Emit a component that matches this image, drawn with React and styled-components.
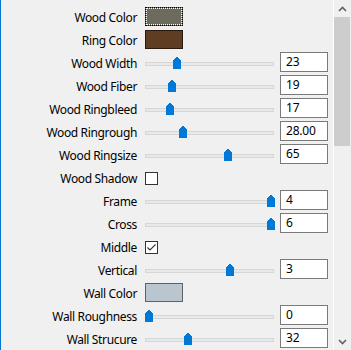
import React from "react";
import styled, { createGlobalStyle } from "styled-components";

const Global = createGlobalStyle`
  html, body { margin: 0; padding: 0; background: #f0f0f0; }
  body { font-family: "Segoe UI", "Noto Sans", "Open Sans", sans-serif; font-size: 12px; color: #000; }
`;

const Frame = styled.div`
  display: flex;
  width: 351px;
  height: 350px;
  overflow: hidden;
  background: #f0f0f0;
`;

const Panel = styled.div`
  flex: 0 0 333px;
  border-left: 1px solid #0078d7;
  padding-top: 4px;
  box-sizing: border-box;
  display: flex;
  flex-direction: column;
`;

const Row = styled.div`
  display: grid;
  grid-template-columns: 136px 129px 48px;
  column-gap: 8px;
  height: 23px;
  align-items: center;
  & > :nth-child(3) { margin-left: -2px; }
`;

const Label = styled.div`
  text-align: right;
  white-space: nowrap;
  padding-top: 4px;
  line-height: 16px;
  letter-spacing: -0.35px;
`;

const Control = styled.div`
  display: flex;
  align-items: center;
  height: 23px;
`;

const Swatch = styled.div`
  width: 38px;
  height: 19px;
  box-sizing: border-box;
  margin-top: 1px;
  background: ${p => p.$color};
  border: 1px ${p => (p.$focus ? "dotted #000" : `solid ${p.$border || "#333"}`)};
  outline: ${p => (p.$focus ? "1px dotted #fff" : "none")};
  outline-offset: -2px;
`;

const SliderWrap = styled.div`
  position: relative;
  width: 129px;
  height: 23px;
`;

const Track = styled.div`
  position: absolute;
  left: 0;
  right: 0;
  top: 12px;
  height: 4px;
  box-sizing: border-box;
  background: #e7eaea;
  border: 1px solid #d6d6d6;
`;

const Thumb = styled.svg`
  position: absolute;
  top: 7px;
  width: 8px;
  height: 12px;
  display: block;
`;

const NumBox = styled.div`
  width: 48px;
  height: 20px;
  margin-top: 1px;
  box-sizing: border-box;
  background: #fff;
  border: 1px solid #7a7a7a;
  padding-left: 5px;
  line-height: 18px;
  font-size: 12px;
  letter-spacing: -0.2px;
`;

const Check = styled.div`
  width: 13px;
  height: 13px;
  box-sizing: border-box;
  margin-top: 4px;
  background: #fff;
  border: 1px solid #333;
  display: flex;
  align-items: center;
  justify-content: center;
`;

const ScrollBar = styled.div`
  flex: 0 0 17px;
  display: flex;
  flex-direction: column;
  background: #f0f0f0;
  border-left: 1px solid #fff;
  box-sizing: border-box;
`;

const Arrow = styled.div`
  height: 17px;
  display: flex;
  align-items: center;
  justify-content: center;
`;

const ScrollTrack = styled.div`
  flex: 1;
  display: flex;
  flex-direction: column;
`;

const ScrollThumb = styled.div`
  height: 129px;
  background: #cdcdcd;
`;

const Slider = ({ pos }) => (
  <SliderWrap>
    <Track />
    <Thumb viewBox="0 0 8 12" style={{ left: pos }}>
      <path d="M0 3 L1 3 L1 2 L2 2 L2 1 L3 1 L3 0 L5 0 L5 1 L6 1 L6 2 L7 2 L7 3 L8 3 L8 12 L0 12 Z" fill="#0078d7" />
    </Thumb>
  </SliderWrap>
);

const rows = [
  { label: "Wood Color", type: "swatch", color: "#6d6b5d", focus: true },
  { label: "Ring Color", type: "swatch", color: "#5f3d23", border: "#2a1a0e" },
  { label: "Wood Width", type: "slider", pos: 28, value: "23" },
  { label: "Wood Fiber", type: "slider", pos: 23, value: "19" },
  { label: "Wood Ringbleed", type: "slider", pos: 21, value: "17" },
  { label: "Wood Ringrough", type: "slider", pos: 34, value: "28.00" },
  { label: "Wood Ringsize", type: "slider", pos: 79, value: "65" },
  { label: "Wood Shadow", type: "check", checked: false },
  { label: "Frame", type: "slider", pos: 122, value: "4" },
  { label: "Cross", type: "slider", pos: 122, value: "6" },
  { label: "Middle", type: "check", checked: true },
  { label: "Vertical", type: "slider", pos: 81, value: "3" },
  { label: "Wall Color", type: "swatch", color: "#b9c6d0", border: "#5f6367" },
  { label: "Wall Roughness", type: "slider", pos: 0, value: "0" },
  { label: "Wall Strucure", type: "slider", pos: 39, value: "32" },
];

export default function App() {
  return (
    <>
      <Global />
      <Frame>
        <Panel>
          {rows.map(r => (
            <Row key={r.label}>
              <Label>{r.label}</Label>
              <Control>
                {r.type === "swatch" && <Swatch $color={r.color} $focus={r.focus} $border={r.border} />}
                {r.type === "slider" && <Slider pos={r.pos} />}
                {r.type === "check" && (
                  <Check>
                    {r.checked && (
                      <svg width="11" height="11" viewBox="0 0 11 11">
                        <polyline points="1.5,5.5 4,8 9.5,2.5" fill="none" stroke="#333" strokeWidth="1.1" />
                      </svg>
                    )}
                  </Check>
                )}
              </Control>
              {r.type === "slider" ? <NumBox>{r.value}</NumBox> : <span />}
            </Row>
          ))}
        </Panel>
        <ScrollBar>
          <Arrow>
            <svg width="9" height="6" viewBox="0 0 9 6">
              <polyline points="1,5 4.5,1.5 8,5" fill="none" stroke="#606060" strokeWidth="1.6" />
            </svg>
          </Arrow>
          <ScrollTrack>
            <ScrollThumb />
          </ScrollTrack>
          <Arrow>
            <svg width="9" height="6" viewBox="0 0 9 6">
              <polyline points="1,1 4.5,4.5 8,1" fill="none" stroke="#606060" strokeWidth="1.6" />
            </svg>
          </Arrow>
        </ScrollBar>
      </Frame>
    </>
  );
}
